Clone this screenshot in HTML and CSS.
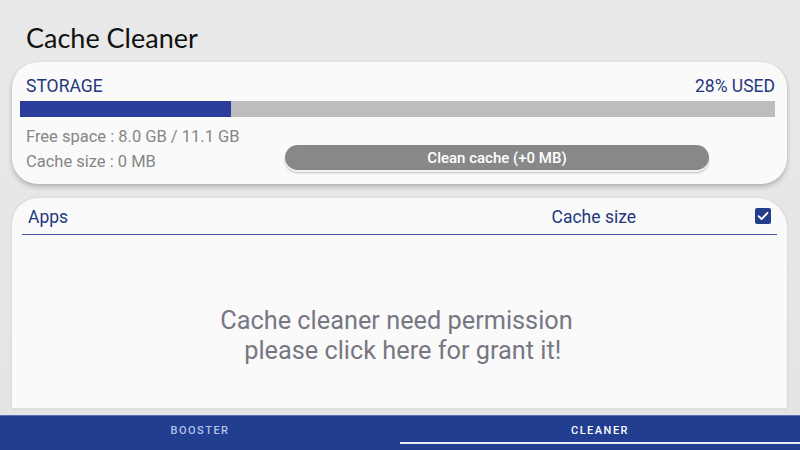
FILE: index.html
```html
<!DOCTYPE html>
<html>
<head>
<meta charset="utf-8">
<link rel="stylesheet" href="styles.css">
</head>
<body>
<div class="screen">
  <h1 class="title">Cache Cleaner</h1>
  <section class="card storage">
    <div class="row head">
      <span class="label">STORAGE</span>
      <span class="label">28% USED</span>
    </div>
    <div class="bar"><div class="fill" style="width:28%"></div></div>
    <div class="info">
      <div class="lines">
        <div class="line">Free space : 8.0 GB / 11.1 GB</div>
        <div class="line">Cache size : 0 MB</div>
      </div>
      <button class="clean">Clean cache (+0 MB)</button>
    </div>
  </section>
  <section class="card apps">
    <div class="apps-head">
      <span class="label">Apps</span>
      <span class="label size-col">Cache size</span>
      <span class="check"><svg width="16" height="16" viewBox="0 0 16 16"><rect x="0" y="0" width="16" height="16" rx="2" fill="#243c8c"/><path d="M3.6 8.2 L6.6 11 L12.4 5" fill="none" stroke="#fff" stroke-width="1.8" stroke-linecap="round" stroke-linejoin="round"/></svg></span>
    </div>
    <div class="message">Cache cleaner need permission
  please click here for grant it!</div>
  </section>
  <nav class="tabs">
    <div class="tab">BOOSTER</div>
    <div class="tab active">CLEANER</div>
  </nav>
</div>
</body>
</html>
```
FILE: styles.css
```css
* { box-sizing: border-box; }
html, body { margin: 0; padding: 0; }
body {
  width: 800px;
  height: 450px;
  overflow: hidden;
  background: #e6e6e6;
  font-family: Roboto, "Noto Sans", sans-serif;
}
.screen {
  width: 800px;
  height: 450px;
  display: flex;
  flex-direction: column;
  background: linear-gradient(#e9e9e9, #e4e4e4);
}
.screen > * { flex-shrink: 0; }
.title {
  margin: 0;
  padding: 23px 0 0 26px;
  height: 62px;
  font-family: Lato, "Open Sans", sans-serif;
  font-weight: 400;
  font-size: 27px;
  line-height: 30px;
  color: #111;
}
.card {
  margin: 0 13px 0 12px;
  background: #fafafa;
  border-radius: 26px;
  box-shadow: 0 3px 5px rgba(0,0,0,0.22), 0 0 2px rgba(0,0,0,0.08);
}
.storage {
  height: 122px;
  padding: 14px 12px 0 8px;
}
.row.head {
  display: flex;
  justify-content: space-between;
  padding: 0 0 0 6px;
  height: 25px;
}
.label {
  color: #23387d;
  font-size: 17.5px;
  line-height: 20px;
}
.bar {
  height: 16px;
  background: #bdbdbd;
}
.fill {
  height: 100%;
  background: #2c3e9c;
}
.info {
  display: flex;
  padding: 7px 0 0 6px;
}
.lines {
  width: 259px;
}
.line {
  color: #868686;
  font-size: 16.5px;
  line-height: 25px;
}
.clean {
  margin-top: 21px;
  width: 424px;
  height: 25px;
  border: none;
  border-radius: 13px;
  background: #888888;
  color: #fff;
  font-family: Roboto, sans-serif;
  font-size: 15px;
  font-weight: 500;
  padding: 0;
  box-shadow: 0 2px 0 #f2f2f2, 0 3px 2px rgba(0,0,0,0.25);
}
.apps {
  margin-top: 14px;
  height: 210px;
  border-radius: 26px 30px 0 0;
  padding: 0 10px 0 10px;
  box-shadow: 0 0 3px rgba(0,0,0,0.12);
}
.apps-head {
  display: flex;
  align-items: center;
  height: 37px;
  border-bottom: 1px solid #4557a8;
  padding: 2px 0 0 6px;
}
.size-col {
  margin-left: auto;
  margin-right: 119px;
}
.check {
  display: flex;
  margin-right: 6px;
  margin-top: -2px;
}
.message {
  white-space: pre;
  text-align: center;
  color: #777782;
  font-size: 25.3px;
  line-height: 30px;
  padding-top: 71px;
  padding-right: 6px;
}
.tabs {
  margin-top: 7px;
  height: 35px;
  display: flex;
  background: #213e90;
  border-top: 1px solid #5a6fae;
}
.tab {
  flex: 1;
  text-align: center;
  font-size: 11px;
  font-weight: 500;
  letter-spacing: 1.5px;
  color: #b4c2ea;
  padding-top: 8px;
}
.tab.active {
  color: #fff;
  position: relative;
}
.tab.active::after {
  content: "";
  position: absolute;
  left: 0;
  right: 0;
  top: 26px;
  height: 2px;
  background: #e6ebf7;
}
```
